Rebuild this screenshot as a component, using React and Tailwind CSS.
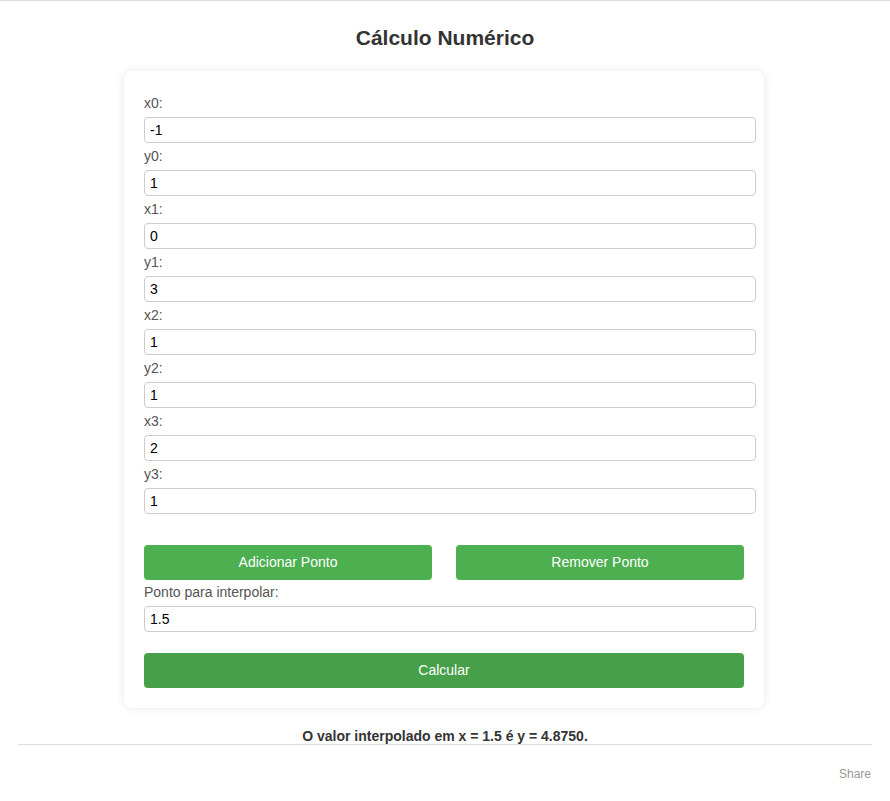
import { useState } from "react";

const pontosIniciais = [
  { x: "-1", y: "1" },
  { x: "0", y: "3" },
  { x: "1", y: "1" },
  { x: "2", y: "1" },
];

function Campo({ rotulo, valor, topo = "mt-[5px]" }) {
  return (
    <div>
      <label className={`block ${topo} mb-[5px] text-[14px] leading-[17px] text-[#555]`}>
        {rotulo}
      </label>
      <input
        type="text"
        defaultValue={valor}
        className="block w-[612px] h-[26px] px-[5px] border border-[#ccc] rounded-[4px] text-[14px] text-black bg-white outline-none"
      />
    </div>
  );
}

export default function App() {
  const [pontos] = useState(pontosIniciais);

  return (
    <div className="min-h-[801px] bg-white border-t border-[#ddd] font-['Liberation_Sans',Arial,sans-serif]">
      <h1 className="pt-[25px] text-center text-[21px] leading-[23px] font-bold text-[#333]">
        Cálculo Numérico
      </h1>
      <div className="ml-[124px] mt-[22px] w-[640px] bg-white rounded-[8px] shadow-[0_0_10px_rgba(0,0,0,0.1)] px-[20px] pt-[19px] pb-[20px]">
        {pontos.map((p, i) => (
          <div key={i}>
            <Campo rotulo={`x${i}:`} valor={p.x} />
            <Campo rotulo={`y${i}:`} valor={p.y} />
          </div>
        ))}
        <div className="flex gap-[24px] mt-[31px]">
          <button className="w-[288px] h-[35px] rounded-[4px] bg-[#4caf50] text-white text-[14px]">
            Adicionar Ponto
          </button>
          <button className="w-[288px] h-[35px] rounded-[4px] bg-[#4caf50] text-white text-[14px]">
            Remover Ponto
          </button>
        </div>
        <Campo rotulo="Ponto para interpolar:" valor="1.5" topo="mt-[4px]" />
        <button className="mt-[21px] w-full h-[35px] rounded-[4px] bg-[#45a049] text-white text-[14px]">
          Calcular
        </button>
      </div>
      <p className="mt-[21px] text-center text-[14px] leading-[15px] font-bold text-[#333]">
        O valor interpolado em x = 1.5 é y = 4.8750.
      </p>
      <div className="mx-[18px] border-t border-[#ddd] h-[1px]" />
      <div className="flex justify-end pr-[19px] pt-[20px] text-[12px] text-[#999]">Share</div>
    </div>
  );
}
